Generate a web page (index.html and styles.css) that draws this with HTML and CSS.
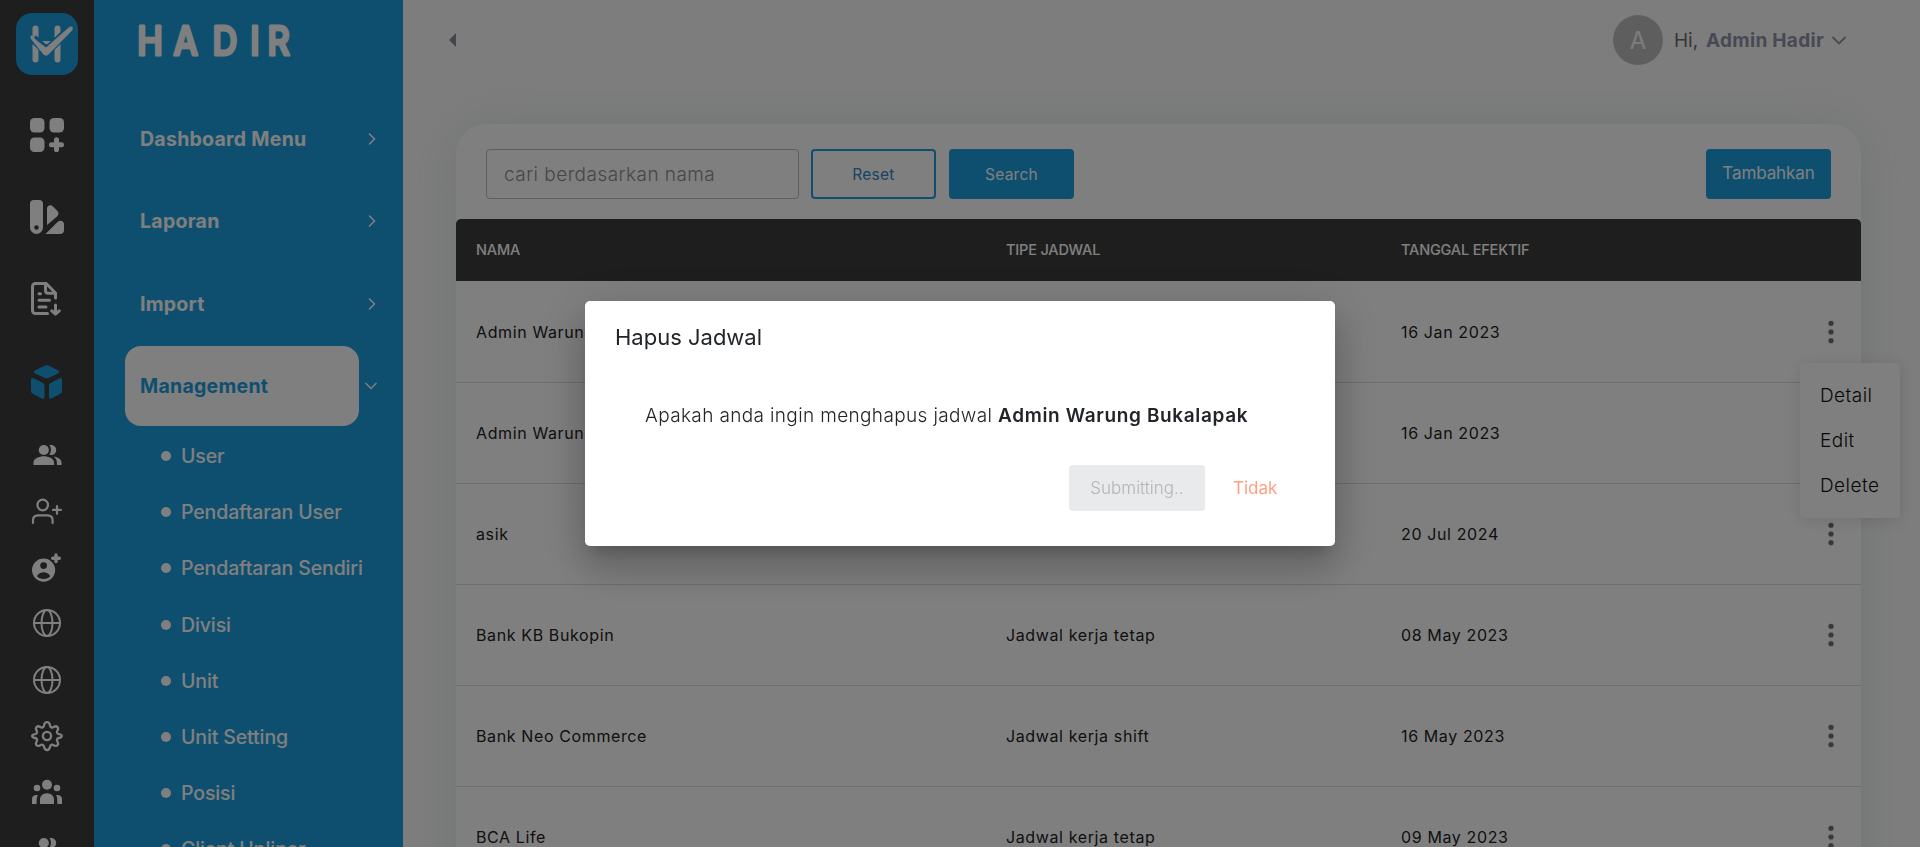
FILE: index.html
```html
<!DOCTYPE html>
<html lang="id">
<head>
<meta charset="utf-8">
<title>Hadir - Jadwal</title>
<link rel="stylesheet" href="styles.css">
</head>
<body>
<svg class="defs" width="0" height="0" aria-hidden="true">
  <symbol id="users" viewBox="0 0 30 30"><circle cx="11.8" cy="10" r="5.1"/><path d="M1.500 25v-2.600c0-4 6-6.200 10.300-6.200s10.300 2.200 10.300 6.200V25zM17.300 5.100c4-.9 6.900 1.500 6.900 4.900s-2.900 5.800-6.900 4.900c2.200-2.700 2.200-7.100 0-9.800zM21.500 16.400c4.200.6 8 2.700 8 6V25h-4.600v-2.600c0-2.400-1.200-4.500-3.400-6z"/></symbol>
  <symbol id="globe" viewBox="0 0 30 30"><g fill="none" stroke="currentColor" stroke-width="2"><circle cx="15" cy="15" r="13"/><ellipse cx="15" cy="15" rx="5.500" ry="13"/><path d="M2 15h26"/></g></symbol>
  <symbol id="right" viewBox="0 0 10 14"><path d="M2 1.500 7.500 7 2 12.500" fill="none" stroke="currentColor" stroke-width="1.500"/></symbol>
  <symbol id="down" viewBox="0 0 14 10"><path d="M1.500 2 7 7.500 12.500 2" fill="none" stroke="currentColor" stroke-width="1.500"/></symbol>
</svg>
<div class="app">
  <nav class="rail">
    <svg class="logo" width="62" height="62" viewBox="0 0 62 62">
      <rect width="62" height="62" rx="16" fill="#1c9fe0"/>
      <g fill="none" stroke="#fff" stroke-linecap="round" stroke-width="6"><path d="M19.500 15.500v31M41.500 15.500v31"/><path d="M20 29.500h21" stroke-width="3"/></g>
      <path d="M17 25.500 30.500 38 55 15.500" fill="none" stroke="#1c9fe0" stroke-width="9"/>
      <path d="M15.500 22.500c5 5 10 9 14.500 12L53 14.200c2.500-1.800 4.800.5 3.300 3L33 41c-2 2-4 2-6 0L15 26c-1-2-.5-3.500.5-3.500z" fill="#fff"/>
    </svg>
    <div class="rail-main">
      <svg width="34" height="34" viewBox="0 0 34 34"><rect width="14.500" height="14.500" rx="4.500"/><rect x="19.500" width="14.500" height="14.500" rx="4.500"/><rect y="19.500" width="14.500" height="14.500" rx="4.500"/><path d="M26.500 21.800v10M21.500 26.800h10" stroke="currentColor" stroke-width="5" stroke-linecap="round"/></svg>
      <svg width="34" height="34" viewBox="0 0 34 34"><path fill-rule="evenodd" d="M4 0h5a4 4 0 0 1 4 4v23.500a6.500 6.500 0 0 1-13 0V4a4 4 0 0 1 4-4zm2.500 25.200a2.300 2.300 0 1 0 0 4.600 2.300 2.300 0 0 0 0-4.600z"/><path d="M17 25V9c0-3.500 3.500-4.800 6-2.500l4 4c2 2 2 4 0 6zM15.500 34l12-12c3-2.500 6.500-.5 6.500 2v6c0 2.500-1.500 4-4 4z"/></svg>
      <svg width="34" height="34" viewBox="0 0 34 34"><g fill="none" stroke="currentColor" stroke-width="3" stroke-linecap="round" stroke-linejoin="round"><path d="M17.500 31.500h-12a3 3 0 0 1-3-3v-24a3 3 0 0 1 3-3h10.700l9.300 9.500V16"/><path d="M15.500 2v6.500c0 1.700 1 2.700 2.700 2.700h7M9 11.800h1.500M9 18.300h10.500M9 25h7M25.500 23v9M21.800 28.800l3.700 3.400 3.700-3.400"/></g></svg>
      <svg class="rail-active" width="34" height="34" viewBox="0 0 34 34"><path d="M4.800 5.500 15 .6q1.800-.8 3.600 0l9.800 4.900q1.500 1.200 0 2.700l-9.800 4.900q-1.800.8-3.600 0L4.800 8.200q-1.500-1.500 0-2.700zM3.500 13.300l9 4.400q2 1 2 3V32q0 2.300-2.500 1.500L3 29q-2-1-2-3V15q.3-2.500 2.500-1.700zM29.500 13.300l-8.500 4.400q-2 1-2 3V32q0 2.300 2.500 1.500L30 29q2-1 2-3V15q-.3-2.500-2.500-1.700z"/></svg>
    </div>
    <div class="rail-sub">
      <svg width="30" height="30"><use href="#users"/></svg>
      <svg width="32" height="30" viewBox="0 0 32 30"><g fill="none" stroke="currentColor" stroke-width="2.200" stroke-linecap="round"><circle cx="11.700" cy="9" r="5.300"/><path d="M2 27v-2.500c0-3.200 2-5.200 5.200-5.200h9.200c3.200 0 5.200 2 5.200 5.200V27M26 10v7.800M22 13.900h7.900"/></g></svg>
      <svg width="32" height="32" viewBox="0 0 32 32"><path fill-rule="evenodd" d="M12.600 7.500a11.600 11.600 0 1 0 0 23.200 11.600 11.600 0 0 0 0-23.200zm0 3.700a3.400 3.400 0 1 1 0 6.800 3.400 3.400 0 0 1 0-6.800zM6 25.200c1-2.600 4.300-3.900 6.600-3.900s5.600 1.300 6.600 3.900c-3.200 3.700-10 3.700-13.200 0z"/><path d="M25 4v6.500M21.700 7.200h6.600" stroke="currentColor" stroke-width="3.400" stroke-linecap="round"/></svg>
      <svg width="30" height="30"><use href="#globe"/></svg>
      <svg width="30" height="30"><use href="#globe"/></svg>
      <svg width="32" height="32" viewBox="0 0 32 32"><g fill="none" stroke="currentColor" stroke-width="2.300" stroke-linejoin="round"><circle cx="16" cy="16" r="4.100"/><path d="M16 2.200c1.800 0 2.700 1.500 3 3.200.4 2 2 2.600 3.700 1.600 1.500-1 2.900-.9 3.700 0 .9.900.9 2.300 0 3.600-1 1.700-.4 3.200 1.500 3.600 1.700.3 2.900.8 2.900 1.800s-1.200 1.700-2.900 2c-1.900.4-2.500 1.900-1.500 3.600.9 1.300.9 2.700 0 3.600-.8.900-2.200.9-3.700 0-1.700-1-3.300-.4-3.700 1.600-.3 1.700-1.200 3.200-3 3.200s-2.700-1.500-3-3.200c-.4-2-2-2.600-3.700-1.600-1.500.9-2.900.9-3.700 0-.9-.9-.9-2.300 0-3.600 1-1.700.4-3.200-1.500-3.600-1.700-.3-2.900-1-2.900-2s1.200-1.500 2.900-1.800c1.900-.4 2.500-1.900 1.500-3.600-.9-1.300-.9-2.700 0-3.600.8-.9 2.200-1 3.700 0 1.700 1 3.300.4 3.700-1.600.3-1.700 1.200-3.200 3-3.200z"/></g></svg>
      <svg width="30" height="30" viewBox="0 0 30 30"><circle cx="15" cy="7.800" r="5"/><circle cx="5" cy="11" r="3.300"/><circle cx="25" cy="11" r="3.300"/><path d="M8 27v-4.500c0-3.500 3-6.300 7-6.300s7 2.800 7 6.300V27zM0 27v-5c0-3 2.500-4.500 6-4-1.200 2-1.400 4-1.400 9zM30 27v-5c0-3-2.500-4.500-6-4 1.200 2 1.400 4 1.400 9z"/></svg>
      <svg width="30" height="30"><use href="#users"/></svg>
    </div>
  </nav>
  <aside class="sidebar">
    <svg class="brand" width="180" height="44" viewBox="0 0 180 44"><text class="brand-text" transform="scale(.86 1)" x="1.500 43.500 89 133 153" y="36.200">HADIR</text></svg>
    <ul class="menu">
      <li><span>Dashboard Menu</span><svg width="10" height="14"><use href="#right"/></svg></li>
      <li><span>Laporan</span><svg width="10" height="14"><use href="#right"/></svg></li>
      <li><span>Import</span><svg width="10" height="14"><use href="#right"/></svg></li>
      <li class="active"><span>Management</span><svg width="14" height="10"><use href="#down"/></svg></li>
    </ul>
    <ul class="submenu">
      <li>User</li><li>Pendaftaran User</li><li>Pendaftaran Sendiri</li><li>Divisi</li><li>Unit</li><li>Unit Setting</li><li>Posisi</li><li>Client Upliner</li>
    </ul>
  </aside>
  <main class="main">
    <header class="topbar">
      <svg width="8" height="14" viewBox="0 0 8 14"><path d="M0 7 7 0v14z" fill="#8a8da0"/></svg>
      <div class="profile"><span class="avatar">A</span><span class="hi">Hi,</span><span class="name">Admin Hadir</span><svg width="16" height="11" viewBox="0 0 16 11"><path d="M1.500 2 8 8.500 14.500 2" fill="none" stroke="currentColor" stroke-width="1.800"/></svg></div>
    </header>
    <section class="card">
      <div class="toolbar">
        <input class="search" placeholder="cari berdasarkan nama">
        <button class="btn outline">Reset</button>
        <button class="btn">Search</button>
        <button class="btn add">Tambahkan</button>
      </div>
      <div class="row head"><span>NAMA</span><span>TIPE JADWAL</span><span>TANGGAL EFEKTIF</span></div>
      <div class="row"><span>Admin Warung Bukalapak</span><span>Jadwal kerja tetap</span><span>16 Jan 2023</span><i class="dots"></i></div>
      <div class="row"><span>Admin Warung Bukalapak</span><span>Jadwal kerja shift</span><span>16 Jan 2023</span><i class="dots"></i></div>
      <div class="row"><span>asik</span><span>Jadwal kerja shift</span><span>20 Jul 2024</span><i class="dots"></i></div>
      <div class="row"><span>Bank KB Bukopin</span><span>Jadwal kerja tetap</span><span>08 May 2023</span><i class="dots"></i></div>
      <div class="row"><span>Bank Neo Commerce</span><span>Jadwal kerja shift</span><span>16 May 2023</span><i class="dots"></i></div>
      <div class="row"><span>BCA Life</span><span>Jadwal kerja tetap</span><span>09 May 2023</span><i class="dots"></i></div>
    </section>
    <div class="dropdown"><span>Detail</span><span>Edit</span><span>Delete</span></div>
  </main>
</div>
<div class="overlay">
  <div class="modal">
    <h2>Hapus Jadwal</h2>
    <p>Apakah anda ingin menghapus jadwal <b>Admin Warung Bukalapak</b></p>
    <div class="actions"><button class="submitting" disabled>Submitting..</button><button class="cancel">Tidak</button></div>
  </div>
</div>
</body>
</html>
```
FILE: styles.css
```css
* { box-sizing: border-box; }
html, body { height: 100%; }
body { margin: 0; overflow: hidden; font-family: "Inter", "Liberation Sans", sans-serif; color: #212529; }
ul { list-style: none; margin: 0; padding: 0; }
button, input { font-family: inherit; }
.defs { display: block; height: 0; }
.app { display: flex; height: 847px; overflow: hidden; background: #fbfbfb; }

.rail { flex: none; width: 94px; background: #3c3c3c; color: #fff; padding: 13px 0 0 16px; }
.rail svg { display: block; fill: currentColor; }
.rail-main { display: grid; grid-auto-rows: 82.200px; width: 62px; margin-top: 19px; align-items: center; justify-items: center; }
.rail-main .rail-active { color: #1c9fe0; }
.rail-sub { display: grid; grid-auto-rows: 56.200px; width: 62px; margin-top: 4px; align-items: center; justify-items: center; }

.sidebar { flex: none; width: 309px; background: #1c9fe0; color: #fff; }
.brand { display: block; margin: 19px 0 0 42px; overflow: visible; }
.brand-text { font-size: 40px; font-weight: 500; fill: #fff; stroke: #fff; stroke-width: 3px; stroke-linejoin: round; }
.menu { margin-top: 36px; padding-left: 31px; }
.menu li { display: flex; align-items: center; height: 80px; margin-bottom: 2.300px; font-size: 19.500px; font-weight: 700; }
.menu span { display: flex; align-items: center; width: 234px; height: 80px; padding-left: 15px; border-radius: 16px; letter-spacing: .27px; }
.menu svg { margin-left: 8px; }
.menu .active { margin-bottom: 0; }
.menu .active span { background: #fff; color: #1c9fe0; }
.menu .active svg { margin-left: 5px; }
.submenu { margin-top: 2px; padding-left: 67px; }
.submenu li { display: flex; align-items: center; gap: 10px; height: 56.200px; font-size: 19.500px; font-weight: 500; letter-spacing: -.12px; white-space: nowrap; }
.submenu li::before { content: ""; width: 10px; height: 10px; border-radius: 50%; background: #fff; }

.main { position: relative; flex: 1; padding: 0 59px 0 53px; }
.topbar { display: flex; align-items: center; justify-content: space-between; height: 80px; margin-left: -7px; padding-right: 14px; }
.profile { display: flex; align-items: center; color: #8f93a8; font-size: 19px; }
.avatar { display: flex; align-items: center; justify-content: center; width: 50px; height: 50px; border-radius: 50%; background: #bdbdbd; color: #fafafa; font-size: 24px; }
.hi { margin-left: 11px; width: 32px; color: #6b6d75; }
.name { font-weight: 700; letter-spacing: .3px; width: 121px; white-space: nowrap; }
.profile svg { margin-left: 4px; }
.card { height: 800px; margin-top: 44px; background: #fff; border-radius: 30px 30px 0 0; box-shadow: 0 0 50px rgba(60, 105, 90, .13); }
.toolbar { display: flex; height: 95px; padding: 25px 30px 0; }
.search { width: 313px; height: 50px; margin-right: 12px; padding: 0 17px; border: 1px solid #bdbdbd; border-radius: 4px; font-size: 19px; font-weight: 300; letter-spacing: .45px; }
.search::placeholder { color: #8d8d8d; }
.btn { width: 125px; height: 50px; margin-right: 13px; padding: 0; border: 0; border-radius: 4px; background: #1c9fe0; color: #fff; font-size: 15.500px; letter-spacing: .25px; }
.outline { border: 2px solid #1c9fe0; background: #fff; color: #2f86c8; }
.add { margin: 0 0 0 auto; padding-bottom: 2px; font-size: 17px; letter-spacing: -.1px; }
.row { display: grid; grid-template-columns: 530px 395px 1fr 20px; align-items: center; height: 101px; padding: 0 20px; border-bottom: 1px solid #dcdcdc; font-size: 16px; letter-spacing: .62px; color: #222; }
.head { height: 62px; margin-bottom: 1px; padding-bottom: 2px; border: 0; border-radius: 5px 5px 0 0; background: #3c3c3c; color: #fff; font-size: 14.500px; font-weight: 500; letter-spacing: -.18px; }
.dots { width: 6px; height: 26px; margin: -1px 0 0 7px; background: radial-gradient(circle, #707070 2.300px, transparent 3px) 0 0 / 6px 8.700px; }
.dropdown { position: absolute; left: 1397px; top: 363px; display: grid; grid-auto-rows: 45px; align-items: center; width: 100px; height: 155px; padding: 10px 20px; border-radius: 4px; background: #fff; box-shadow: 0 2px 16px rgba(0, 0, 0, .12); font-size: 19px; font-weight: 300; letter-spacing: .45px; color: #111; }

.overlay { position: fixed; inset: 0; display: flex; align-items: center; justify-content: center; background: rgba(0, 0, 0, .5); }
.modal { width: 750px; height: 245px; padding: 20px 0 0 30px; border-radius: 5px; background: #fff; box-shadow: 0 11px 15px -7px rgba(0, 0, 0, .2), 0 24px 38px 3px rgba(0, 0, 0, .14), 0 9px 46px 8px rgba(0, 0, 0, .12); }
.modal h2 { margin: 0; font-size: 22px; font-weight: 400; line-height: 32px; }
.modal p { margin: 48px 0 0 30px; font-size: 19px; font-weight: 300; line-height: 30px; letter-spacing: .36px; white-space: nowrap; }
.modal b { font-weight: 600; letter-spacing: .64px; }
.actions { display: flex; align-items: center; margin: 34px 0 0 454px; }
.actions button { border: 0; padding: 0; font-size: 17px; }
.submitting { width: 136px; height: 46px; border-radius: 4px; background: #e8eaec; color: #b2b5b8; font-weight: 300; }
.actions .cancel { margin-left: 28px; background: none; color: #ffa085; }
```
